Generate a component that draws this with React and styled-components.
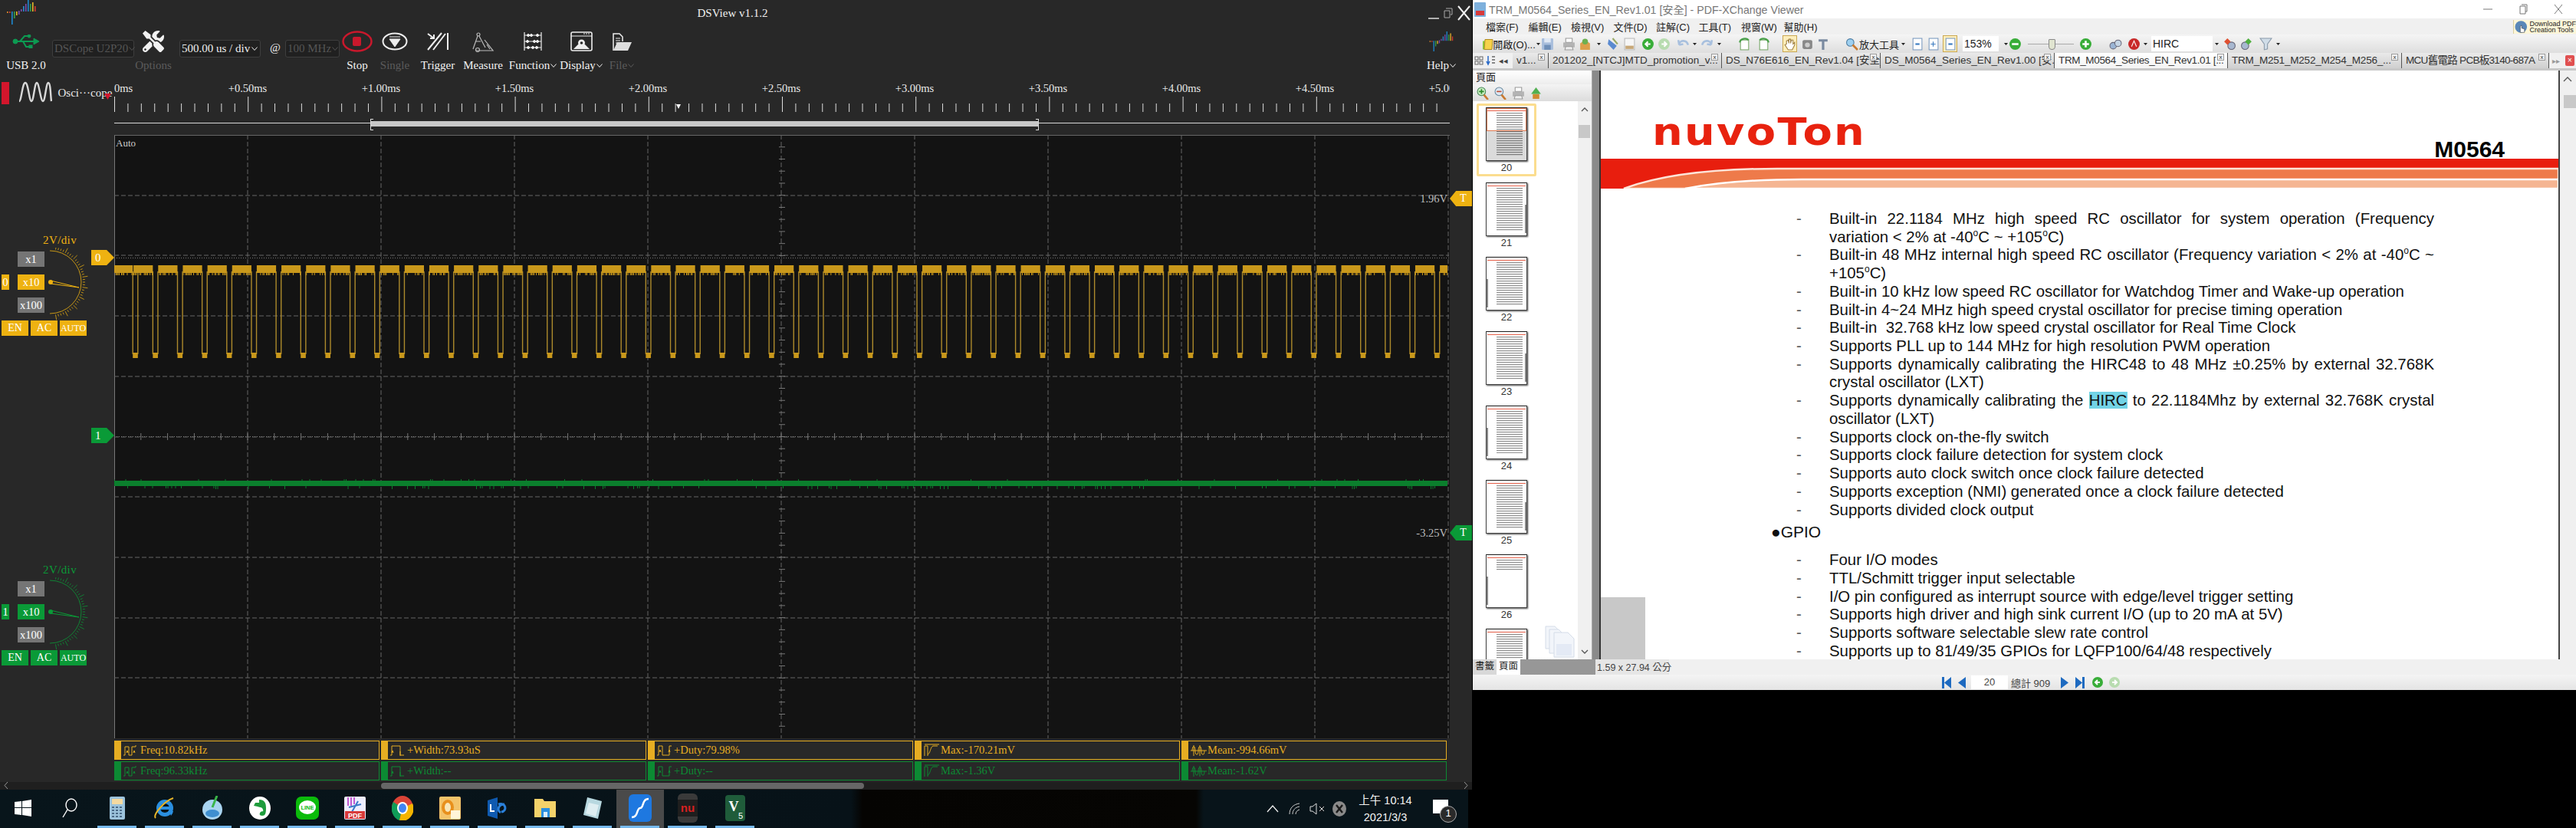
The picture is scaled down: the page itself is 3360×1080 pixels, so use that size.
import React from "react";
import styled, { createGlobalStyle } from "styled-components";
import { FaTools } from "react-icons/fa";

const AMBER = "#eeb211";
const GREEN = "#0a9a37";
const SERIF = `"Liberation Serif", "Noto Sans CJK TC", serif`;
const SANS = `"Liberation Sans", "Noto Sans CJK TC", sans-serif`;

const GlobalStyle = createGlobalStyle`
  html, body { margin: 0; padding: 0; background: #000; overflow: hidden; }
  * { box-sizing: border-box; }
`;

const Screen = styled.div`
  width: 3360px;
  height: 1080px;
  display: grid;
  grid-template-columns: 1921px 1439px;
  background: #000;
  overflow: hidden;
`;

const LeftColumn = styled.div`
  display: flex;
  flex-direction: column;
`;

/* ---------- DSView ---------- */

const Scope = styled.div`
  width: 1920px;
  height: 1030px;
  background: #282828;
  color: #e8e8e8;
  font-family: ${SERIF};
  font-size: 15px;
  display: flex;
  flex-direction: column;
`;

const TitleBar = styled.div`
  height: 36px;
  display: flex;
  align-items: flex-start;
  justify-content: space-between;
  padding-left: 9px;
`;

const Title = styled.div`
  margin-top: 9px;
  font-size: 15px;
  color: #f0f0f0;
`;

const WinButtons = styled.div`
  display: flex;
  align-items: center;
  gap: 6px;
  margin-top: 7px;
  color: #ddd;
`;

const Toolbar = styled.div`
  height: 64px;
  display: flex;
  padding-top: 4px;
`;

const Tool = styled.div`
  width: ${p => p.$w}px;
  margin-left: ${p => p.$ml || 0}px;
  display: flex;
  flex-direction: column;
  align-items: center;
  color: ${p => (p.$off ? "#5c5c5c" : "#f2f2f2")};
`;

const ToolIcon = styled.div`
  height: 28px;
  display: flex;
  align-items: center;
  justify-content: center;
`;

const ToolLabel = styled.div`
  margin-top: 8px;
  height: 18px;
  line-height: 18px;
  white-space: nowrap;
  display: flex;
  align-items: center;
`;

const ChevronMark = styled.svg`
  flex: none;
  margin-left: 1px;
`;

const Chevron = () => (
  <ChevronMark width="8" height="5" viewBox="0 0 8 5">
    <path d="M0.5 0.5L4 4.5L7.5 0.5" fill="none" stroke="currentColor" />
  </ChevronMark>
);

const Combo = styled.div`
  width: ${p => p.$w}px;
  margin-left: ${p => p.$ml || 0}px;
  height: 23px;
  margin-top: 12px;
  border: 1px solid #3e3e3e;
  border-radius: 3px;
  background: #202020;
  display: flex;
  align-items: center;
  justify-content: space-between;
  padding: 0 3px 0 2px;
  color: ${p => (p.$off ? "#555" : "#eee")};
  white-space: nowrap;
`;

const AtSign = styled.div`
  width: 16px;
  margin-left: 12px;
  margin-top: 14px;
  color: #eee;
`;

const Body = styled.div`
  height: 920px;
  display: flex;
`;

const Rail = styled.div`
  width: 149px;
  flex: none;
  display: flex;
  flex-direction: column;
`;

const ChannelHead = styled.div`
  height: 76px;
  position: relative;
  display: flex;
  align-items: flex-start;
  padding: 6px 0 0 2px;
  &::after {
    content: "";
    position: absolute;
    left: 136px;
    top: 22px;
    width: 9px;
    height: 8px;
    background: #d3162c;
    clip-path: polygon(0 0, 100% 0, 50% 100%);
  }
`;

const RedTab = styled.div`
  width: 10px;
  height: 29px;
  margin-top: 1px;
  background: #d3162c;
`;

const ChannelName = styled.div`
  margin: 7px 0 0 0;
  font-size: 15px;
  white-space: nowrap;
`;

const Strip = styled.div`
  margin-top: ${p => p.$mt}px;
  height: 133px;
  padding-left: 2px;
  color: ${p => p.$color};
`;

const StripTitle = styled.div`
  height: 18px;
  line-height: 16px;
  padding-left: 54px;
  font-size: 15px;
  letter-spacing: 0.4px;
`;

const StripMain = styled.div`
  height: 95px;
  display: flex;
`;

const ChanTag = styled.div`
  width: 10px;
  height: 20px;
  margin-top: 35px;
  background: ${p => p.$color};
  color: #fff;
  text-align: center;
  line-height: 20px;
  font-size: 15px;
`;

const Ranges = styled.div`
  margin-left: 11px;
  padding-top: 5px;
  display: flex;
  flex-direction: column;
  gap: 10px;
`;

const Range = styled.div`
  width: 35px;
  height: 20px;
  line-height: 20px;
  text-align: center;
  background: ${p => p.$on || "#757575"};
  color: #fff;
  font-size: 14.5px;
  white-space: nowrap;
`;

const Dial = styled.svg`
  margin-left: 4px;
  display: block;
`;

const StripButtons = styled.div`
  display: flex;
  gap: 3px;
`;

const StripButton = styled.div`
  width: 35px;
  height: 20px;
  line-height: 20px;
  text-align: center;
  background: ${p => p.$color};
  color: #fff;
  font-size: ${p => (p.$tight ? 12 : 14)}px;
  white-space: nowrap;
`;

const ScopeMain = styled.div`
  width: 1742px;
  flex: none;
  display: flex;
  flex-direction: column;
`;

const TimeLabels = styled.div`
  height: 26px;
  padding-top: 6px;
  line-height: 18px;
  font-size: 14.5px;
  display: flex;
  overflow: hidden;
  white-space: nowrap;
`;

const TimeLabel = styled.div`
  flex: none;
  width: ${p => (p.$first ? 87 : 174)}px;
  text-align: ${p => (p.$first ? "left" : "center")};
`;

const Ticks = styled.svg`
  display: block;
`;

const Overview = styled.div`
  height: 30px;
  position: relative;
  &::before {
    content: "";
    position: absolute;
    left: 0;
    right: 0;
    top: 14px;
    height: 1px;
    background: #d8d8d8;
  }
`;

const OverviewThumb = styled.div`
  position: absolute;
  left: 335px;
  top: 12px;
  width: 870px;
  height: 7px;
  background: #c8c8c8;
  &::before,
  &::after {
    content: "";
    position: absolute;
    top: -3px;
    width: 3px;
    height: 13px;
    border: 1px solid #ddd;
  }
  &::before { left: -1px; border-right: 0; }
  &::after { right: -1px; border-left: 0; }
`;

const Plot = styled.div`
  position: relative;
  height: 787px;
  background: #131313;
  border-left: 1px solid #777;
  border-top: 1px solid #666;
  width: 1742px;
`;

const PlotSvg = styled.svg`
  display: block;
  position: absolute;
  left: -1px;
  top: -1px;
`;

const AutoLabel = styled.div`
  position: absolute;
  left: 1px;
  top: 2px;
  font-size: 13px;
  color: #ccc;
`;

const Marker = styled.div`
  position: absolute;
  left: -31px;
  top: ${p => p.$top}px;
  width: 30px;
  height: 20px;
  background: ${p => p.$color};
  clip-path: polygon(0 0, 67% 0, 100% 50%, 67% 100%, 0 100%);
  color: #fff;
  font-size: 15px;
  line-height: 20px;
  padding-left: 5px;
`;

const TrigMarker = styled.div`
  position: absolute;
  left: 1741px;
  top: ${p => p.$top}px;
  width: 29px;
  height: 20px;
  background: ${p => p.$color};
  clip-path: polygon(0 50%, 28% 0, 100% 0, 100% 100%, 28% 100%);
  color: #fff;
  font-size: 14px;
  line-height: 20px;
  text-align: center;
  padding-left: 6px;
`;

const TrigValue = styled.div`
  position: absolute;
  right: 3px;
  top: ${p => p.$top}px;
  font-size: 14.5px;
  color: #bbb;
`;

const Measures = styled.div`
  margin-top: 3px;
  display: grid;
  grid-template-columns: repeat(5, 346px);
  grid-auto-rows: 25px;
  gap: 2px;
`;

const MeasureCell = styled.div`
  border: 1px solid ${p => p.$color};
  border-left: 9px solid ${p => p.$color};
  background: #282828;
  color: ${p => p.$color};
  display: flex;
  align-items: center;
  gap: 1px;
  padding-left: 2px;
  font-size: 14.5px;
  white-space: nowrap;
`;

const HScroll = styled.div`
  height: 10px;
  padding: 1px 0 1px 497px;
  background: #1f1f1f;
  position: relative;
`;

const HThumb = styled.div`
  width: 630px;
  height: 8px;
  border-radius: 4px;
  background: #666;
`;

const HArrow = styled.svg`
  position: absolute;
  top: 0;
  ${p => (p.$right ? "right: 5px;" : "left: 5px;")}
`;

/* ---------- Taskbar ---------- */

const Taskbar = styled.div`
  width: 1915px;
  height: 50px;
  display: flex;
  align-items: stretch;
  background: linear-gradient(
    90deg,
    #08151b 0,
    #071218 1110px,
    #050402 1125px,
    #060503 1560px,
    #08141a 1570px,
    #08141a 100%
  );
  color: #f4f4f4;
  font-family: ${SANS};
`;

const TaskSlot = styled.div`
  width: ${p => p.$w || 62}px;
  flex: none;
  display: flex;
  align-items: center;
  justify-content: center;
  position: relative;
  padding-bottom: 3px;
  background: ${p => (p.$active ? "#4a4a4a" : "transparent")};
  &::after {
    content: ${p => (p.$run ? '""' : "none")};
    position: absolute;
    left: 5px;
    right: 6px;
    bottom: 0;
    height: 3px;
    background: #76b9ed;
  }
`;

const Tray = styled.div`
  margin-left: auto;
  display: flex;
  align-items: center;
  padding-right: 26px;
`;

const TrayIcon = styled.div`
  width: 29px;
  display: flex;
  justify-content: center;
`;

const Clock = styled.div`
  width: 84px;
  margin-left: 4px;
  text-align: center;
  font-size: 14.5px;
  line-height: 22px;
`;

const Notify = styled.div`
  position: relative;
  margin-left: 20px;
  width: 20px;
  height: 18px;
  background: #fff;
  margin-bottom: 6px;
  &::after {
    content: "1";
    position: absolute;
    left: 9px;
    top: 8px;
    width: 20px;
    height: 20px;
    border-radius: 50%;
    border: 1px solid #aaa;
    background: #2a2a2a;
    color: #fff;
    text-align: center;
    font-size: 13px;
    line-height: 18px;
  }
`;

/* ---------- PDF viewer ---------- */

const Pdf = styled.div`
  width: 1439px;
  height: 900px;
  background: #f0f0f0;
  font-family: ${SANS};
  display: flex;
  flex-direction: column;
  color: #222;
`;

const PdfTitle = styled.div`
  height: 24px;
  background: #fff;
  display: flex;
  align-items: center;
  padding-left: 2px;
  font-size: 14.2px;
  color: #777;
`;

const PdfTitleText = styled.div`
  margin-left: 4px;
  flex: 1;
  white-space: nowrap;
`;

const PdfWinButton = styled.div`
  width: 46px;
  display: flex;
  justify-content: center;
`;

const MenuBar = styled.div`
  height: 21px;
  display: flex;
  align-items: center;
  padding-left: 17px;
  font-size: 13px;
  background: #f0f0f0;
`;

const MenuItem = styled.div`
  width: 55.5px;
  white-space: nowrap;
`;

const Promo = styled.div`
  margin-left: auto;
  width: 82px;
  height: 18px;
  background: #fdf6d8;
  border-left: 1px solid #d8cfa0;
  display: flex;
  align-items: center;
  gap: 3px;
  padding-left: 1px;
  font-size: 9px;
  line-height: 8px;
  white-space: nowrap;
`;

const PdfTools = styled.div`
  height: 24px;
  display: flex;
  align-items: center;
  background: linear-gradient(#f5f5f5, #dedede);
  font-size: 13px;
  white-space: nowrap;
`;

const PdfSlot = styled.div`
  flex: none;
  height: 22px;
  width: ${p => p.$w}px;
  margin-left: ${p => p.$ml}px;
  display: flex;
  align-items: center;
  justify-content: center;
  ${p => p.$hot && "background: #fdeebb; border: 1px solid #c9a752;"}
`;

const PdfInput = styled.div`
  flex: none;
  width: ${p => p.$w}px;
  margin-left: ${p => p.$ml}px;
  height: 20px;
  line-height: 20px;
  padding-left: 2px;
  background: #fff;
  font-size: 14px;
`;

const Slider = styled.div`
  flex: none;
  width: 60px;
  margin-left: ${p => p.$ml}px;
  height: 1px;
  background: #aaa;
  position: relative;
  &::after {
    content: "";
    position: absolute;
    left: 27px;
    top: -6px;
    width: 7px;
    height: 12px;
    background: #e0e4d0;
    border: 1px solid #888;
    border-radius: 1px 1px 4px 4px;
  }
`;

const Tabs = styled.div`
  height: 20px;
  display: flex;
  font-size: 13.5px;
  background: #d8d8d8;
`;

const TabTools = styled.div`
  width: 52px;
  flex: none;
  background: #f0f0f0;
  display: flex;
  align-items: center;
  gap: 3px;
  padding-left: 2px;
  color: #444;
  font-size: 11px;
`;

const Tab = styled.div`
  flex: none;
  width: ${p => p.$w}px;
  position: relative;
  padding: 0 0 0 5px;
  line-height: 20px;
  letter-spacing: ${p => p.$ls || 0}px;
  white-space: nowrap;
  border-right: 1px solid #555;
  color: #333;
  background: ${p =>
    p.$active
      ? "linear-gradient(#fff, #f4f4f4)"
      : "linear-gradient(#eaeaea, #cfcfcf)"};
`;

const TabClose = styled.span`
  position: absolute;
  right: 4px;
  top: 1px;
  width: 9px;
  height: 9px;
  border: 1px solid #999;
  background: #f4f4f4;
  font-size: 8px;
  line-height: 7px;
  letter-spacing: 0;
  text-align: center;
`;

const TabEnd = styled.div`
  flex: 1;
  display: flex;
  align-items: center;
  justify-content: space-between;
  padding: 0 2px 0 4px;
  background: #f0f0f0;
  font-size: 10px;
  color: #999;
`;

const RedClose = styled.div`
  width: 12px;
  height: 14px;
  background: #e05050;
  border-radius: 2px;
  color: #fff;
  text-align: center;
  line-height: 14px;
  font-size: 10px;
`;

const PdfMain = styled.div`
  height: 771px;
  display: flex;
  border-top: 3px solid #c8c8c8;
`;

const Pane = styled.div`
  width: 155px;
  flex: none;
  background: #fff;
  display: flex;
  flex-direction: column;
  position: relative;
  overflow: hidden;
`;

const PaneHead = styled.div`
  height: 18px;
  line-height: 18px;
  padding-left: 4px;
  font-size: 13px;
  background: linear-gradient(#fff, #ededed);
`;

const PaneTools = styled.div`
  height: 22px;
  display: flex;
  align-items: center;
  gap: 6px;
  padding-left: 5px;
  background: linear-gradient(#f4f4f4, #dcdcdc);
`;

const PaneBody = styled.div`
  flex: 1;
  position: relative;
  display: flex;
  overflow: hidden;
`;

const ThumbList = styled.div`
  width: 137px;
  padding: 3px 0 0 5px;
  display: flex;
  flex-direction: column;
  align-items: flex-start;
`;

const ThumbFrame = styled.div`
  width: 78px;
  height: 97px;
  flex: none;
  padding-top: ${p => (p.$current ? 5 : 6)}px;
  display: flex;
  flex-direction: column;
  align-items: center;
  ${p =>
    p.$current &&
    "outline: 3px solid #fbdd8f; outline-offset: -3px; border-radius: 2px; height: 95px; margin-bottom: 2px;"}
`;

const ThumbPage = styled.div`
  width: 54px;
  height: 70px;
  flex: none;
  position: relative;
  background: #fff;
  border: 1px solid #444;
  border-top-color: #222;
  box-shadow: 1px 1px 2px #444;
  padding: 6px 5px 0 13px;
  overflow: visible;
  &::before {
    content: "";
    position: absolute;
    left: 1px;
    right: 1px;
    top: 3px;
    height: 1px;
    background: #e5604a;
  }
`;

const ThumbLines = styled.div`
  height: ${p => p.$fill}%;
  background: repeating-linear-gradient(#8e8e8e 0 1px, #e8e8e8 1px 2px, #fff 2px 3px);
`;

const ThumbEdge = styled.div`
  position: absolute;
  top: 28px;
  bottom: 3px;
  width: 2px;
  background: #8a8a8a;
  ${p => (p.$right ? "right: 0;" : "left: 0;")}
`;

const ThumbView = styled.div`
  position: absolute;
  left: 0;
  right: 0;
  top: 0;
  height: 30px;
  border: 1px solid #e0794f;
  &::after {
    content: "";
    position: absolute;
    left: -1px;
    right: -1px;
    top: 29px;
    height: 39px;
    background: rgba(0, 0, 0, 0.14);
  }
`;

const ThumbNo = styled.div`
  margin-top: 2px;
  font-size: 13px;
  line-height: 14px;
  color: #333;
`;

const PaneScroll = styled.div`
  width: 18px;
  flex: none;
  background: #f0f0f0;
  position: relative;
`;

const PaneScrollThumb = styled.div`
  position: absolute;
  left: 1px;
  top: 31px;
  width: 15px;
  height: 17px;
  background: #c8c8c8;
`;

const ScrollArrow = styled.svg`
  position: absolute;
  left: 4px;
  ${p => (p.$down ? "bottom: 7px;" : "top: 8px;")}
`;

const GhostDocs = styled.svg`
  position: absolute;
  left: 94px;
  bottom: 2px;
`;

const Splitter = styled.div`
  width: 12px;
  flex: none;
  background: #8a8a8a;
  border-right: 2px solid #333;
  border-left: 1px solid #aaa;
`;

const Page = styled.div`
  width: 1249px;
  flex: none;
  background: #fff;
  position: relative;
  overflow: hidden;
  color: #111;
`;

const PageHead = styled.div`
  height: 115px;
  display: flex;
  align-items: flex-end;
  justify-content: space-between;
  padding: 0 70px 0 67px;
`;

const Brand = styled.div`
  font-family: "DejaVu Sans", sans-serif;
  font-weight: 700;
  font-size: 49px;
  line-height: 50px;
  letter-spacing: 2px;
  color: #e8220f;
  margin-bottom: 9px;
  transform: scaleX(1.14);
  transform-origin: left center;
`;

const PartNo = styled.div`
  font-weight: 700;
  font-size: 30px;
  line-height: 30px;
  color: #000;
  margin-bottom: -3px;
`;

const Band = styled.svg`
  display: block;
`;

const Sheet = styled.div`
  padding: 28px 0 0 255px;
  width: 1090px;
  font-size: 20.4px;
  line-height: 23.72px;
`;

const Item = styled.div`
  display: flex;
  width: 832px;
`;

const Dash = styled.div`
  width: 43px;
  flex: none;
  color: #555;
`;

const ItemText = styled.div`
  flex: 1;
  text-align: justify;
`;

const Degree = styled.span`
  font-size: 12px;
  line-height: 0;
  vertical-align: 8px;
`;

const Hit = styled.span`
  background: #72d3e6;
`;

const SectionHead = styled.div`
  margin: 2px 0 10px -33px;
  height: 30px;
  line-height: 30px;
  font-size: 21px;
`;

const CornerSquare = styled.div`
  position: absolute;
  left: 0;
  bottom: 0;
  width: 58px;
  height: 81px;
  background: #c8c8c8;
`;

const VScroll = styled.div`
  flex: 1;
  background: #f0f0f0;
  border-left: 2px solid #444;
  position: relative;
`;

const VThumb = styled.div`
  position: absolute;
  left: 5px;
  top: 32px;
  width: 16px;
  height: 17px;
  background: #c8c8c8;
`;

const StatusRow = styled.div`
  height: 20px;
  display: flex;
  align-items: stretch;
  background: #f0f0f0;
  font-size: 13px;
  white-space: nowrap;
`;

const PaneTab = styled.div`
  width: 31px;
  flex: none;
  text-align: center;
  line-height: 18px;
  font-size: 12.5px;
  background: ${p => (p.$on ? "#fff" : "#d8d8d8")};
`;

const Dither = styled.div`
  width: 98px;
  flex: none;
  background: repeating-conic-gradient(#8a8a8a 0 25%, #a4a4a4 0 50%) 0 0 / 2px 2px;
`;

const PageSize = styled.div`
  width: 96px;
  padding-left: 2px;
  line-height: 22px;
  background: #e6e6e6;
  color: #444;
  font-size: 12.5px;
`;

const NavRow = styled.div`
  height: 20px;
  display: flex;
  align-items: center;
  background: linear-gradient(#f4f4f4, #e4e4e4);
  padding-left: 612px;
  font-size: 13px;
  color: #444;
`;

const NavInput = styled.div`
  width: 48px;
  margin: 0 4px 0 7px;
  height: 18px;
  line-height: 18px;
  background: #fff;
  text-align: center;
`;

const NavIcon = styled.svg`
  margin-left: ${p => p.$ml || 0}px;
  flex: none;
`;

/* ---------- Drawings ---------- */

const Bars = ({ w, h }) => {
  const bars = [
    [0, 15, 17, "#e08a2a"], [3, 15, 17, "#d63a30"], [6, 15, 32, "#1e88d0"], [9, 15, 24, "#33a04a"],
    [12, 15, 20, "#e8b52a"], [15, 14, 19, "#7a4ab0"], [18, 12, 15, "#7a4ab0"], [21, 8, 15, "#2a8ad0"],
    [24, 5, 15, "#7a4ab0"], [27, 0, 15, "#1e88d0"], [30, 5, 15, "#33a04a"], [33, 3, 15, "#e8b52a"], [36, 8, 15, "#d63a30"],
  ];
  return (
    <svg width={w} height={h} viewBox="0 0 39 32">
      {bars.map(([x, a, b, c]) => (
        <rect key={x} x={x} y={a} width="1.6" height={b - a} fill={c} />
      ))}
    </svg>
  );
};

const UsbIcon = () => (
  <svg width="36" height="18" viewBox="0 0 36 18">
    <g fill="#0d9a52" stroke="#0d9a52">
      <circle cx="4" cy="9" r="3" />
      <path d="M4 9H28" strokeWidth="2" />
      <path d="M28 5l7 4-7 4z" />
      <path d="M10 9L16 2H21M14 9L18 16H23" fill="none" strokeWidth="2" />
      <circle cx="22" cy="2" r="2" />
      <rect x="22" y="14" width="4" height="4" />
    </g>
  </svg>
);

const StopIcon = () => (
  <svg width="40" height="28" viewBox="0 0 40 28">
    <ellipse cx="20" cy="14" rx="18.5" ry="12.5" fill="none" stroke="#c9182c" strokeWidth="2.5" />
    <rect x="14" y="8" width="11" height="12" rx="2" fill="#c9182c" />
  </svg>
);

const SingleIcon = () => (
  <svg width="34" height="24" viewBox="0 0 34 24">
    <ellipse cx="17" cy="12" rx="15.5" ry="10.5" fill="none" stroke="#eee" strokeWidth="2" />
    <path d="M10 9H24L17 19Z M10 6H24" fill="#eee" stroke="#eee" />
  </svg>
);

const TriggerIcon = () => (
  <svg width="30" height="24" viewBox="0 0 30 24">
    <g stroke="#eee" fill="none">
      <path d="M28 1V23" strokeWidth="2" />
      <path d="M20 1L2 23M25 2L9 23" strokeWidth="2" />
      <path d="M2 2L10 8M10 3V8H5" strokeWidth="2" />
    </g>
  </svg>
);

const MeasureIcon = () => (
  <svg width="30" height="28" viewBox="0 0 30 28">
    <g stroke="#bbb" fill="none" strokeWidth="1.2">
      <circle cx="9" cy="5" r="2" />
      <path d="M8 7L2 24M10 7L18 22" />
      <path d="M6 14H12M17 12L28 26H6" />
      <circle cx="8" cy="25" r="2.5" />
      <path d="M20 18L24 24" />
    </g>
  </svg>
);

const AbacusIcon = () => (
  <svg width="24" height="24" viewBox="0 0 24 24">
    <g stroke="#eee" fill="#eee">
      <path d="M1 0V24M23 0V24M1 4H23M1 12H23M1 20H23" strokeWidth="1.2" fill="none" />
      <circle cx="6" cy="4" r="1.5" /><circle cx="10" cy="4" r="1.5" /><circle cx="18" cy="4" r="1.5" />
      <circle cx="5" cy="12" r="1.5" /><circle cx="14" cy="12" r="1.5" /><circle cx="18" cy="12" r="1.5" />
      <circle cx="6" cy="20" r="1.5" /><circle cx="12" cy="20" r="1.5" /><circle cx="17" cy="20" r="1.5" />
    </g>
  </svg>
);

const DisplayIcon = () => (
  <svg width="29" height="26" viewBox="0 0 29 26">
    <rect x="1" y="1" width="27" height="24" rx="2" fill="none" stroke="#eee" strokeWidth="1.6" />
    <path d="M1 6H28" stroke="#eee" />
    <path d="M20 3h2M23 3h2M17 3h2" stroke="#eee" />
    <circle cx="14.5" cy="15" r="4.5" fill="#eee" />
    <path d="M4 23L10 17H19L25 23Z" fill="#eee" />
    <circle cx="14.5" cy="15" r="1.8" fill="#282828" />
  </svg>
);

const FileIcon = () => (
  <svg width="28" height="26" viewBox="0 0 28 26">
    <path d="M3 25V3H11L15 7V13" fill="none" stroke="#eee" strokeWidth="1.5" />
    <path d="M6 9H12M6 12H12M6 15H12" stroke="#eee" />
    <path d="M3 25L8 14H27L22 25Z" fill="#ddd" />
  </svg>
);

const WaveIcon = () => (
  <svg width="44" height="28" viewBox="0 0 44 28" style={{ marginLeft: 12 }}>
    <path
      d="M1 26C4 26 5 2 9 2S14 26 17 26 21 2 24 2 29 26 32 26 36 2 39 2 42 20 43 26"
      fill="none"
      stroke="#d8d8d8"
      strokeWidth="2.4"
    />
  </svg>
);

const DialDrawing = ({ color }) => {
  const ticks = [];
  for (let i = 0; i <= 36; i++) {
    const a = ((-80 + (160 * i) / 36) * Math.PI) / 180;
    const long = i % 4 === 0;
    const r0 = 43;
    const r1 = long ? 50 : 46;
    ticks.push(
      <line
        key={i}
        x1={3 + r0 * Math.cos(a)}
        y1={45 + r0 * Math.sin(a)}
        x2={3 + r1 * Math.cos(a)}
        y2={45 + r1 * Math.sin(a)}
        stroke={color}
        strokeOpacity="0.75"
      />
    );
  }
  return (
    <Dial width="54" height="95" viewBox="0 0 54 95">
      <path d="M3 4A41 41 0 0 1 3 86" fill="none" stroke={color} strokeOpacity="0.8" />
      {ticks}
      <polygon points="4,43 41,52 4,47" fill="none" stroke={color} />
      <circle cx="4" cy="45" r="3" fill={color} />
    </Dial>
  );
};

const Pulse = ({ kind }) => {
  const d = {
    freq: "M1 15H3V4H8V15H12V4H17V2M5 12L6 9L7 12M14 12L15 9L16 12",
    width: "M1 15H3V3H14V15H19M3 12L4 9L5 12M14 10V16",
    duty: "M1 15H3V3H8V15H17V3H20M4 11L5 8L6 11M16 11L17 8L18 11",
    max: "M2 16V3H6V16M6 14C9 14 10 3 13 3H19M2 1H21",
    mean: "M1 9H22M3 9C3 2 7 2 7 9S11 16 11 9 15 2 15 9 19 16 19 9M5 2V16M13 2V16",
  }[kind];
  return (
    <svg width="22" height="18" viewBox="0 0 22 18">
      <path d={d} fill="none" stroke="currentColor" />
    </svg>
  );
};

/* wave forms are deterministic so every render looks the same */
const noise = i => (i * 7919 + ((i * i) % 97) * 31) % 13;

const PERIOD = 32.15;

const buildChannel0 = () => {
  let band = "";
  let comb = "";
  let edges = "";
  for (let n = 0; n < 55; n++) {
    const start = n === 0 ? -7 : n * PERIOD - 7;
    const fall = start + 25.2 + (n === 0 ? 6 : 0);
    const x0 = Math.max(start, 0);
    if (x0 >= 1739) break;
    const x1 = Math.min(fall, 1739);
    band += `M${x0} 170H${x1}V180H${x0}Z`;
    for (let x = x0; x < x1; x += 1.5) {
      if (noise(Math.round(x * 2)) > 5) comb += `M${x} 180h1v3h-1Z`;
    }
    if (fall < 1739) {
      const rise = Math.min(fall + 6.6, 1739);
      band += `M${fall} 284H${rise}V291H${fall}Z`;
      edges += `M${fall} 178V286M${rise} 178V286`;
    }
  }
  return { band, comb, edges };
};

const buildChannel1 = () => {
  let ticks = "";
  for (let x = 0; x < 1739; x += 2.5) {
    const v = noise(Math.round(x * 2));
    if (v > 10) ticks += `M${x} 458v${v - 8}`;
    if (v < 1) ticks += `M${x} 451v-${2}`;
  }
  return ticks;
};

const CH0 = buildChannel0();
const CH1 = buildChannel1();

const Waveforms = () => {
  const vLines = Array.from({ length: 10 }, (_, i) => (i + 1) * 174);
  const hLines = Array.from({ length: 9 }, (_, i) => Math.round((i + 1) * 78.7));
  const hTicks = Array.from({ length: 49 }, (_, i) => (i + 1) * 34.8);
  const vTicks = Array.from({ length: 49 }, (_, i) => (i + 1) * 15.74);
  return (
    <PlotSvg width="1742" height="787" viewBox="0 0 1742 787">
      <g stroke="#666" strokeDasharray="6 3">
        {vLines.map(x => <line key={x} x1={x} y1="0" x2={x} y2="787" />)}
        {hLines.map(y => <line key={y} x1="0" y1={y} x2="1741" y2={y} />)}
      </g>
      <line x1="0" y1="160.5" x2="1741" y2="160.5" stroke="#777" strokeDasharray="1 2" />
      <line x1="0" y1="393.5" x2="1741" y2="393.5" stroke="#777" strokeDasharray="1 2" />
      <g stroke="#777">
        {hTicks.map(x => <line key={x} x1={x} y1="389" x2={x} y2="398" />)}
        {vTicks.map(y => <line key={y} x1="867" y1={y} x2="875" y2={y} />)}
      </g>
      <path d={CH0.edges} stroke="#ad8a2c" strokeWidth="1.4" fill="none" />
      <path d={CH0.band} fill="#c9981b" />
      <path d={CH0.comb} fill="#c9981b" />
      <rect x="0" y="451" width="1739" height="7" fill="#0b7f2d" />
      <path d={CH1} stroke="#0b7f2d" fill="none" />
    </PlotSvg>
  );
};

const RulerTicks = () => {
  const items = [];
  for (let i = 0; i <= 100; i++) {
    const x = i * 17.42 + 0.5;
    if (x > 1742) break;
    items.push(<line key={i} x1={x} y1={i % 10 === 0 ? 0 : 9} x2={x} y2="20" />);
  }
  return (
    <Ticks width="1742" height="20" viewBox="0 0 1742 20" stroke="#ddd">
      {items}
      <path d="M733 10l3 6 3-6z" fill="#fff" stroke="none" />
    </Ticks>
  );
};

const ChannelStrip = ({ id, color, mt }) => (
  <Strip $mt={mt} $color={color}>
    <StripTitle>2V/div</StripTitle>
    <StripMain>
      <ChanTag $color={color}>{id}</ChanTag>
      <Ranges>
        <Range>x1</Range>
        <Range $on={color}>x10</Range>
        <Range>x100</Range>
      </Ranges>
      <DialDrawing color={color} />
    </StripMain>
    <StripButtons>
      <StripButton $color={color}>EN</StripButton>
      <StripButton $color={color}>AC</StripButton>
      <StripButton $color={color} $tight>AUTO</StripButton>
    </StripButtons>
  </Strip>
);

const measureRows = [
  { color: "#e6ad22", vals: ["Freq:10.82kHz", "+Width:73.93uS", "+Duty:79.98%", "Max:-170.21mV", "Mean:-994.66mV"] },
  { color: "#0c8a33", vals: ["Freq:96.33kHz", "+Width:--", "+Duty:--", "Max:-1.36V", "Mean:-1.62V"] },
];
const measureKinds = ["freq", "width", "duty", "max", "mean"];
const timeLabels = ["+0.50ms", "+1.00ms", "+1.50ms", "+2.00ms", "+2.50ms", "+3.00ms", "+3.50ms", "+4.00ms", "+4.50ms", "+5.00ms"];

const DSView = () => (
  <Scope>
    <TitleBar>
      <Bars w={39} h={32} />
      <Title>DSView v1.1.2</Title>
      <WinButtons>
        <svg width="14" height="16" viewBox="0 0 14 16"><path d="M0 15H14" stroke="#ddd" strokeWidth="1.5" /></svg>
        <svg width="12" height="16" viewBox="0 0 12 16"><path d="M3 2H11V10H9M1 5H8V14H1Z" stroke="#aaa" fill="none" /></svg>
        <svg width="17" height="20" viewBox="0 0 17 20" style={{ marginRight: 2 }}><path d="M1 1L16 19M16 1L1 19" stroke="#eee" strokeWidth="2" /></svg>
      </WinButtons>
    </TitleBar>
    <Toolbar>
      <Tool $w={68}>
        <ToolIcon><UsbIcon /></ToolIcon>
        <ToolLabel>USB 2.0</ToolLabel>
      </Tool>
      <Combo $w={107} $off>DSCope U2P20<Chevron /></Combo>
      <Tool $w={50} $off>
        <ToolIcon><FaTools size={28} color="#f2f2f2" /></ToolIcon>
        <ToolLabel>Options</ToolLabel>
      </Tool>
      <Combo $w={106} $ml={9}>500.00 us / div<Chevron /></Combo>
      <AtSign>@</AtSign>
      <Combo $w={71} $ml={4} $off>100 MHz<Chevron /></Combo>
      <Tool $w={44} $ml={1}>
        <ToolIcon><StopIcon /></ToolIcon>
        <ToolLabel>Stop</ToolLabel>
      </Tool>
      <Tool $w={50} $ml={2} $off>
        <ToolIcon><SingleIcon /></ToolIcon>
        <ToolLabel>Single</ToolLabel>
      </Tool>
      <Tool $w={50} $ml={6}>
        <ToolIcon><TriggerIcon /></ToolIcon>
        <ToolLabel>Trigger</ToolLabel>
      </Tool>
      <Tool $w={52} $ml={8}>
        <ToolIcon><MeasureIcon /></ToolIcon>
        <ToolLabel>Measure</ToolLabel>
      </Tool>
      <Tool $w={58} $ml={10}>
        <ToolIcon><AbacusIcon /></ToolIcon>
        <ToolLabel>Function<Chevron /></ToolLabel>
      </Tool>
      <Tool $w={56} $ml={6}>
        <ToolIcon><DisplayIcon /></ToolIcon>
        <ToolLabel>Display<Chevron /></ToolLabel>
      </Tool>
      <Tool $w={42} $ml={4} $off>
        <ToolIcon><FileIcon /></ToolIcon>
        <ToolLabel>File<Chevron /></ToolLabel>
      </Tool>
      <Tool $w={40} $ml={1028}>
        <ToolIcon><Bars w={33} h={26} /></ToolIcon>
        <ToolLabel>Help<Chevron /></ToolLabel>
      </Tool>
    </Toolbar>
    <Body>
      <Rail>
        <ChannelHead>
          <RedTab />
          <WaveIcon />
          <ChannelName>&nbsp;&nbsp;Osci···cope</ChannelName>
        </ChannelHead>
        <ChannelStrip id="0" color={AMBER} mt={129} />
        <ChannelStrip id="1" color={GREEN} mt={297} />
      </Rail>
      <ScopeMain>
        <TimeLabels>
          <TimeLabel $first>0ms</TimeLabel>
          {timeLabels.map(t => <TimeLabel key={t}>{t}</TimeLabel>)}
        </TimeLabels>
        <RulerTicks />
        <Overview><OverviewThumb /></Overview>
        <Plot>
          <Waveforms />
          <AutoLabel>Auto</AutoLabel>
          <Marker $top={149} $color={AMBER}>0</Marker>
          <Marker $top={381} $color={GREEN}>1</Marker>
          <TrigValue $top={74}>1.96V</TrigValue>
          <TrigValue $top={510}>-3.25V</TrigValue>
          <TrigMarker $top={72} $color={AMBER}>T</TrigMarker>
          <TrigMarker $top={508} $color={GREEN}>T</TrigMarker>
        </Plot>
        <Measures>
          {measureRows.map(row =>
            row.vals.map((v, i) => (
              <MeasureCell key={row.color + i} $color={row.color}>
                <Pulse kind={measureKinds[i]} />
                {v}
              </MeasureCell>
            ))
          )}
        </Measures>
      </ScopeMain>
    </Body>
    <HScroll>
      <HArrow width="6" height="9" viewBox="0 0 6 9"><path d="M5 0L1 4.5L5 9" fill="none" stroke="#999" /></HArrow>
      <HThumb />
      <HArrow $right width="6" height="9" viewBox="0 0 6 9"><path d="M1 0L5 4.5L1 9" fill="none" stroke="#999" /></HArrow>
    </HScroll>
  </Scope>
);

const taskIcons = {
  start: (
    <svg width="22" height="22" viewBox="0 0 22 22" fill="#fff">
      <path d="M0 3L9 2V10H0ZM10 2L22 0V10H10ZM0 11H9V20L0 19ZM10 11H22V22L10 20Z" />
    </svg>
  ),
  search: (
    <svg width="22" height="26" viewBox="0 0 22 26" fill="none" stroke="#fff" strokeWidth="1.4">
      <ellipse cx="13" cy="9" rx="7" ry="8" />
      <path d="M8 15L2 25" />
    </svg>
  ),
  calc: (
    <svg width="22" height="30" viewBox="0 0 22 30">
      <rect x="1" y="0" width="20" height="30" rx="2" fill="#9cc3dc" />
      <rect x="4" y="3" width="14" height="7" fill="#f4d9a0" />
      <path d="M4 14h3M9 14h3M14 14h3M4 18h3M9 18h3M14 18h3M4 22h3M9 22h3M14 22h3M4 26h3M9 26h3M14 26h3" stroke="#4a6a88" strokeWidth="2" />
    </svg>
  ),
  ie: (
    <svg width="30" height="30" viewBox="0 0 30 30">
      <circle cx="15" cy="15" r="11" fill="#2a8fe0" />
      <circle cx="15" cy="15" r="6" fill="#08131a" />
      <rect x="6" y="13" width="18" height="4" fill="#2a8fe0" />
      <path d="M21 19l5 0a11 11 0 0 1-3 6z" fill="#2a8fe0" />
      <path d="M3 28C-1 24 14 6 26 2" fill="none" stroke="#e8b62a" strokeWidth="2" />
    </svg>
  ),
  ball: (
    <svg width="28" height="32" viewBox="0 0 28 32">
      <ellipse cx="14" cy="18" rx="13" ry="13" fill="#a8d4f0" />
      <ellipse cx="14" cy="23" rx="9" ry="5" fill="#3f8fd0" />
      <path d="M14 15L20 0" stroke="#3ab54a" strokeWidth="3" />
    </svg>
  ),
  ever: (
    <svg width="28" height="30" viewBox="0 0 28 30">
      <ellipse cx="14" cy="15" rx="14" ry="15" fill="#fff" />
      <path d="M8 8H13V4C20 4 22 8 22 15S21 25 17 25 13 22 15 20 19 21 18 17 12 14 11 13L6 12Z" fill="#1e9c3c" />
    </svg>
  ),
  line: (
    <svg width="30" height="30" viewBox="0 0 30 30">
      <rect width="30" height="30" rx="7" fill="#0bbb0b" />
      <ellipse cx="15" cy="14" rx="11" ry="9" fill="#fff" />
      <text x="15" y="17" fontSize="7.5" fontWeight="700" fill="#0bbb0b" textAnchor="middle" fontFamily="Liberation Sans">LINE</text>
    </svg>
  ),
  pdf: (
    <svg width="28" height="30" viewBox="0 0 28 30">
      <rect width="28" height="30" fill="#eef" rx="2" />
      <path d="M5 1V12M9 1V12M13 1V10" stroke="#c05ad0" strokeWidth="2" />
      <path d="M6 14L22 10M10 20L18 6" stroke="#3a78c8" strokeWidth="2" />
      <rect x="1" y="19" width="26" height="10" fill="#d83a3a" />
      <text x="14" y="27.5" fontSize="9" fontWeight="700" fill="#fff" textAnchor="middle" fontFamily="Liberation Sans">PDF</text>
    </svg>
  ),
  chrome: (
    <svg width="28" height="32" viewBox="0 0 28 32">
      <ellipse cx="14" cy="16" rx="14" ry="16" fill="#db4437" />
      <path d="M14 16L2 8A14 16 0 0 0 10 32Z" fill="#0f9d58" />
      <path d="M14 16L10 32A14 16 0 0 0 27 10Z" fill="#f4b400" />
      <ellipse cx="14" cy="16" rx="7" ry="8" fill="#fff" />
      <ellipse cx="14" cy="16" rx="5" ry="6" fill="#4285f4" />
    </svg>
  ),
  outlook: (
    <svg width="28" height="30" viewBox="0 0 28 30">
      <rect width="28" height="30" fill="#f4c46a" rx="2" />
      <ellipse cx="11" cy="14" rx="8" ry="10" fill="#e8901c" />
      <ellipse cx="11" cy="14" rx="4" ry="6" fill="#f8e6b8" />
      <rect x="15" y="18" width="12" height="11" fill="#fff4d8" />
    </svg>
  ),
  lync: (
    <svg width="26" height="28" viewBox="0 0 26 28">
      <path d="M0 4L13 0V28L0 24Z" fill="#0f5ab0" />
      <path d="M4 9V18H9" stroke="#fff" strokeWidth="2" fill="none" />
      <path d="M14 9C24 6 26 18 18 19M17 20C11 16 15 9 22 9" stroke="#2a7fd8" strokeWidth="3" fill="none" />
    </svg>
  ),
  folder: (
    <svg width="28" height="24" viewBox="0 0 28 24">
      <path d="M0 0H11L13 3H28V24H0Z" fill="#f4d26a" />
      <rect x="9" y="12" width="11" height="12" fill="#2a8fe0" />
      <rect x="12" y="17" width="5" height="7" fill="#d8eefc" />
    </svg>
  ),
  note: (
    <svg width="26" height="30" viewBox="0 0 26 30">
      <path d="M6 1L25 6L20 29L1 24Z" fill="#b8d8e0" />
      <path d="M8 8L21 11L17 26L4 22Z" fill="#dfeef2" />
    </svg>
  ),
  wave: (
    <svg width="30" height="36" viewBox="0 0 30 36">
      <rect width="30" height="36" rx="6" fill="#1e78e0" />
      <path d="M4 30C13 30 10 18 15 18S17 6 26 6" fill="none" stroke="#fff" strokeWidth="2.5" />
    </svg>
  ),
  nu: (
    <svg width="28" height="38" viewBox="0 0 28 38">
      <rect x="1" y="0" width="26" height="38" rx="6" fill="#3a3a3a" />
      <rect x="1" y="8" width="26" height="22" fill="#1e1e1e" />
      <text x="14" y="24" fontSize="15" fontWeight="700" fill="#d82020" textAnchor="middle" fontFamily="Liberation Sans">nu</text>
    </svg>
  ),
  v5: (
    <svg width="26" height="34" viewBox="0 0 26 34">
      <rect width="26" height="34" rx="4" fill="#1f5c3a" />
      <text x="11" y="21" fontSize="18" fontWeight="700" fill="#fff" textAnchor="middle" fontFamily="Liberation Serif">V</text>
      <text x="20" y="31" fontSize="11" fill="#fff" textAnchor="middle" fontFamily="Liberation Sans">5</text>
    </svg>
  ),
};

const taskItems = [
  { k: "start", w: 60 },
  { k: "search", w: 62 },
  { k: "calc", run: true },
  { k: "ie", run: true },
  { k: "ball", run: true },
  { k: "ever", run: true },
  { k: "line", run: true },
  { k: "pdf", run: true },
  { k: "chrome", run: true },
  { k: "outlook", run: true },
  { k: "lync", run: true },
  { k: "folder", run: true },
  { k: "note", run: true },
  { k: "wave", run: true, active: true },
  { k: "nu", run: true },
  { k: "v5", run: true },
];

const TaskBar = () => (
  <Taskbar>
    {taskItems.map(t => (
      <TaskSlot key={t.k} $w={t.w} $run={t.run} $active={t.active}>
        {taskIcons[t.k]}
      </TaskSlot>
    ))}
    <Tray>
      <TrayIcon>
        <svg width="16" height="10" viewBox="0 0 16 10"><path d="M1 9L8 1L15 9" stroke="#eee" fill="none" strokeWidth="1.3" /></svg>
      </TrayIcon>
      <TrayIcon>
        <svg width="16" height="16" viewBox="0 0 16 16" fill="none" stroke="#ccc"><path d="M1 15C1 7 6 2 14 1M5 15C5 10 8 6 14 5M9 15C9 12 11 10 14 9" /></svg>
      </TrayIcon>
      <TrayIcon>
        <svg width="20" height="16" viewBox="0 0 20 16" fill="none" stroke="#ddd"><path d="M1 5H4L9 1V15L4 11H1Z" /><path d="M13 5L19 11M19 5L13 11" /></svg>
      </TrayIcon>
      <TrayIcon>
        <svg width="18" height="20" viewBox="0 0 18 20"><ellipse cx="9" cy="10" rx="9" ry="10" fill="#8a8a8a" /><path d="M5 5L13 15M13 5L5 15" stroke="#1a1a1a" strokeWidth="2.4" /></svg>
      </TrayIcon>
      <Clock>上午 10:14<br />2021/3/3</Clock>
      <Notify />
    </Tray>
  </Taskbar>
);

/* small colour glyphs of the viewer toolbar, 16x16 */
const pdfGlyphs = {
  folder: <><path d="M1 4H7V15H1Z" fill="#8ac63c" /><path d="M4 2H14L13 15H3Z" fill="#f6d24a" stroke="#b08a20" /></>,
  save: <><rect x="1" y="1" width="14" height="14" rx="1" fill="#a8bedc" /><rect x="4" y="1" width="8" height="5" fill="#dfe8f4" /><rect x="4" y="9" width="8" height="6" fill="#6f8fb8" /></>,
  print: <><path d="M4 1H12V6H4Z" fill="#fff" stroke="#999" /><path d="M1 6H15V12H1Z" fill="#b4b4b4" /><path d="M4 11L3 15H13L12 11Z" fill="#eee" stroke="#999" /></>,
  box: <><path d="M2 7L8 3L14 7V15H2Z" fill="#dca04a" /><circle cx="8" cy="5" r="3.5" fill="#6cb050" /></>,
  mail: <><path d="M3 2L13 10L9 15L2 8Z" fill="#5a8ad0" /><path d="M8 1L14 8" stroke="#9a6" strokeWidth="2" /></>,
  ocr: <><rect x="2" y="1" width="12" height="14" fill="#f6f6f6" stroke="#bbb" /><path d="M3 10H13V14H3Z" fill="#c8a878" /></>,
  back: <><circle cx="8" cy="8" r="7" fill="#38ad38" /><path d="M11 8H6M8 5L5 8L8 11" stroke="#fff" strokeWidth="2" fill="none" /></>,
  fwd: <><circle cx="8" cy="8" r="7" fill="#b8dcb0" /><path d="M5 8H10M8 5L11 8L8 11" stroke="#fff" strokeWidth="2" fill="none" /></>,
  undo: <path d="M3 9C3 3 12 2 14 9M3 9L2 3M3 9L8 8" stroke="#a8c0de" strokeWidth="2.4" fill="none" />,
  redo: <path d="M13 9C13 3 4 2 2 9M13 9L14 3M13 9L8 8" stroke="#a8c0de" strokeWidth="2.4" fill="none" />,
  rotL: <><rect x="3" y="3" width="10" height="12" fill="#fff" stroke="#78a868" /><path d="M2 6C3 1 10 0 13 3" stroke="#4aa04a" strokeWidth="2" fill="none" /></>,
  rotR: <><rect x="3" y="3" width="10" height="12" fill="#fff" stroke="#78a868" /><path d="M14 6C13 1 6 0 3 3" stroke="#4aa04a" strokeWidth="2" fill="none" /></>,
  hand: <path d="M4 8V4L6 3L7 7V2H9V7L10 3H12V8L14 6V9L11 15H6L2 9Z" fill="#fff" stroke="#a08040" />,
  cam: <><rect x="2" y="3" width="12" height="11" rx="2" fill="#888" /><circle cx="8" cy="9" r="3" fill="#ccc" /></>,
  type: <path d="M2 2H13V5H9V15H6V5H2Z" fill="#7a8aa0" />,
  zoom: <><circle cx="6" cy="6" r="4.5" fill="#9ed0f0" stroke="#4a7aa0" /><path d="M9 9L15 15" stroke="#c87a30" strokeWidth="2.5" /></>,
  page1: <><rect x="3" y="1" width="11" height="14" fill="#fff" stroke="#7a9ac0" /><path d="M6 8H11" stroke="#3a7ac0" strokeWidth="2" /></>,
  page2: <><rect x="3" y="1" width="11" height="14" fill="#fff" stroke="#7a9ac0" /><path d="M8 5V11M5 8H11" stroke="#3a7ac0" /></>,
  minus: <><circle cx="8" cy="8" r="7" fill="#38ad38" /><path d="M4 8H12" stroke="#fff" strokeWidth="2.4" /></>,
  plus: <><circle cx="8" cy="8" r="7" fill="#38ad38" /><path d="M4 8H12M8 4V12" stroke="#fff" strokeWidth="2.4" /></>,
  find: <><circle cx="5" cy="10" r="4" fill="#9ab4d4" stroke="#667" /><circle cx="11" cy="7" r="4" fill="#c4d4e4" stroke="#667" /></>,
  acro: <><circle cx="8" cy="8" r="7" fill="#c82828" /><path d="M5 11L8 4L11 11" stroke="#fff" fill="none" /></>,
  prev: <><circle cx="10" cy="10" r="4.5" fill="#a8b8d0" stroke="#667" /><path d="M5 1L9 5L5 9L1 5Z" fill="#e05030" /></>,
  next: <><circle cx="6" cy="10" r="4.5" fill="#a8b8d0" stroke="#667" /><path d="M10 1L14 5L10 9L6 5Z" fill="#50b040" /></>,
  funnel: <path d="M1 1H15L10 8V14L6 15V8Z" fill="#d0dde8" stroke="#8a9aaa" />,
  tree: <><rect x="4" y="9" width="8" height="6" fill="#d08a30" /><path d="M8 1L14 9H2Z" fill="#50b050" /></>,
  zoomIn: <><circle cx="6" cy="6" r="5" fill="#c8ecc0" stroke="#4a8a5a" /><path d="M3 6H9M6 3V9" stroke="#2a8a2a" strokeWidth="1.5" /><path d="M9 10L14 16" stroke="#c87a30" strokeWidth="2.5" /></>,
  zoomOut: <><circle cx="6" cy="6" r="5" fill="#dde8f2" stroke="#6a8aa0" /><path d="M3 6H9" stroke="#c04a30" strokeWidth="1.5" /><path d="M9 10L14 16" stroke="#c87a30" strokeWidth="2.5" /></>,
};

const Glyph = ({ k, size = 17 }) => (
  <svg width={size} height={size} viewBox="0 0 16 16">{pdfGlyphs[k]}</svg>
);

const Drop = () => (
  <svg width="5" height="3" viewBox="0 0 5 3"><path d="M0 0H5L2.5 3Z" fill="#222" /></svg>
);

/* [left x on screen, width, content] */
const toolRow = [
  [1933, 16, <Glyph k="folder" />],
  [1950, 50, <span>開啟(O)...</span>],
  [2003, 6, <Drop />],
  [2010, 17, <Glyph k="save" />],
  [2038, 17, <Glyph k="print" />],
  [2059, 17, <Glyph k="box" />],
  [2082, 6, <Drop />],
  [2095, 17, <Glyph k="mail" />],
  [2117, 17, <Glyph k="ocr" />],
  [2141, 17, <Glyph k="back" />],
  [2162, 17, <Glyph k="fwd" />],
  [2187, 17, <Glyph k="undo" />],
  [2207, 6, <Drop />],
  [2218, 17, <Glyph k="redo" />],
  [2239, 6, <Drop />],
  [2267, 17, <Glyph k="rotL" />],
  [2292, 17, <Glyph k="rotR" />],
  [2325, 19, <Glyph k="hand" />],
  [2349, 17, <Glyph k="cam" />],
  [2370, 17, <Glyph k="type" />],
  [2407, 17, <Glyph k="zoom" />],
  [2426, 50, <span>放大工具</span>],
  [2479, 6, <Drop />],
  [2492, 17, <Glyph k="page1" />],
  [2513, 17, <Glyph k="page2" />],
  [2534, 19, <Glyph k="page1" />],
];

const secondRow = [
  [2620, 17, <Glyph k="minus" />],
];

const thirdRow = [
  [2712, 17, <Glyph k="plus" />],
  [2751, 17, <Glyph k="find" />],
  [2775, 17, <Glyph k="acro" />],
  [2795, 6, <Drop />],
];

const fourthRow = [
  [2888, 6, <Drop />],
  [2900, 17, <Glyph k="prev" />],
  [2922, 17, <Glyph k="next" />],
  [2947, 17, <Glyph k="funnel" />],
  [2968, 6, <Drop />],
];

const slots = (row, from) => {
  let edge = from;
  return row.map(([x, w, node]) => {
    const ml = x - edge;
    edge = x + w;
    return (
      <PdfSlot key={x} $w={w} $ml={ml} $hot={x === 2325 || x === 2534}>
        {node}
      </PdfSlot>
    );
  });
};

const tabs = [
  { w: 47, t: "v1..." },
  { w: 226, t: "201202_[NTCJ]MTD_promotion_v..." },
  { w: 207, t: "DS_N76E616_EN_Rev1.04 [安全]" },
  { w: 227, t: "DS_M0564_Series_EN_Rev1.00 [安..." },
  { w: 226, t: "TRM_M0564_Series_EN_Rev1.01 [...", active: true, ls: -0.35 },
  { w: 227, t: "TRM_M251_M252_M254_M256_...", ls: -0.2 },
  { w: 192, t: "MCU舊電路 PCB板3140-687A", ls: -0.7 },
];

const thumbs = [
  { n: 20, fill: 92, current: true },
  { n: 21, fill: 92, edge: "right" },
  { n: 22, fill: 90, edge: "left" },
  { n: 23, fill: 92, edge: "right" },
  { n: 24, fill: 88, edge: "left" },
  { n: 25, fill: 90, edge: "right" },
  { n: 26, fill: 22, edge: "left" },
  { n: 27, fill: 90 },
];

const Deg = () => <Degree>o</Degree>;

const clockItems = [
  <>Built-in 22.1184 MHz high speed RC oscillator for system operation (Frequency variation &lt; 2% at -40<Deg />C ~ +105<Deg />C)</>,
  <>Built-in 48 MHz internal high speed RC oscillator (Frequency variation &lt; 2% at -40<Deg />C ~ +105<Deg />C)</>,
  <>Built-in 10 kHz low speed RC oscillator for Watchdog Timer and Wake-up operation</>,
  <>Built-in 4~24 MHz high speed crystal oscillator for precise timing operation</>,
  <>Built-in&nbsp; 32.768 kHz low speed crystal oscillator for Real Time Clock</>,
  <>Supports PLL up to 144 MHz for high resolution PWM operation</>,
  <>Supports dynamically calibrating the HIRC48 to 48 MHz ±0.25% by external 32.768K crystal oscillator (LXT)</>,
  <>Supports dynamically calibrating the <Hit>HIRC</Hit> to 22.1184Mhz by external 32.768K crystal oscillator (LXT)</>,
  <>Supports clock on-the-fly switch</>,
  <>Supports clock failure detection for system clock</>,
  <>Supports auto clock switch once clock failure detected</>,
  <>Supports exception (NMI) generated once a clock failure detected</>,
  <>Supports divided clock output</>,
];

const gpioItems = [
  "Four I/O modes",
  "TTL/Schmitt trigger input selectable",
  "I/O pin configured as interrupt source with edge/level trigger setting",
  "Supports high driver and high sink current I/O (up to 20 mA at 5V)",
  "Supports software selectable slew rate control",
  "Supports up to 81/49/35 GPIOs for LQFP100/64/48 respectively",
];

const Viewer = () => (
  <Pdf>
    <PdfTitle>
      <svg width="15" height="19" viewBox="0 0 15 19">
        <rect width="15" height="19" rx="1" fill="#7eb0dc" />
        <rect x="2" y="11" width="11" height="6" fill="#d83a3a" />
      </svg>
      <PdfTitleText>TRM_M0564_Series_EN_Rev1.01 [安全] - PDF-XChange Viewer</PdfTitleText>
      <PdfWinButton><svg width="12" height="2"><path d="M0 1H12" stroke="#777" /></svg></PdfWinButton>
      <PdfWinButton><svg width="11" height="14" viewBox="0 0 11 14"><path d="M3 1H10V10H8M1 3H8V13H1Z" stroke="#777" fill="none" /></svg></PdfWinButton>
      <PdfWinButton><svg width="12" height="14" viewBox="0 0 12 14"><path d="M1 1L11 13M11 1L1 13" stroke="#777" /></svg></PdfWinButton>
    </PdfTitle>
    <MenuBar>
      {["檔案(F)", "編輯(E)", "檢視(V)", "文件(D)", "註解(C)", "工具(T)", "視窗(W)", "幫助(H)"].map(m => (
        <MenuItem key={m}>{m}</MenuItem>
      ))}
      <Promo>
        <svg width="18" height="18" viewBox="0 0 18 18">
          <circle cx="9" cy="9" r="8.5" fill="#5a88b8" />
          <path d="M8 17V8L10 7V11L14 12V17Z" fill="#fff" stroke="#333" strokeWidth="0.6" />
        </svg>
        <div>Download PDF<br />Creation Tools</div>
      </Promo>
    </MenuBar>
    <PdfTools>
      {slots(toolRow, 1921)}
      <PdfInput $w={47} $ml={7}>153%</PdfInput>
      <PdfSlot $w={6} $ml={6}><Drop /></PdfSlot>
      {slots(secondRow, 2619)}
      <Slider $ml={8} />
      {slots(thirdRow, 2705)}
      <PdfInput $w={80} $ml={5}>HIRC</PdfInput>
      {slots(fourthRow, 2886)}
    </PdfTools>
    <Tabs>
      <TabTools>
        <svg width="12" height="12" viewBox="0 0 12 12" fill="none" stroke="#666"><rect x="1" y="1" width="4" height="4" /><rect x="7" y="1" width="4" height="4" /><rect x="1" y="7" width="4" height="4" /><rect x="7" y="7" width="4" height="4" /></svg>
        <svg width="14" height="14" viewBox="0 0 14 14"><path d="M3 1V11M1 8L3 12L5 8" stroke="#2a6ac8" fill="none" strokeWidth="1.5" /><path d="M8 2H12M8 6H12M8 10H12" stroke="#666" strokeWidth="1.5" /></svg>
        <span>◂◂</span>
      </TabTools>
      {tabs.map(t => (
        <Tab key={t.t} $w={t.w} $active={t.active} $ls={t.ls}>
          {t.t}
          <TabClose>x</TabClose>
        </Tab>
      ))}
      <TabEnd><span>▸▸</span><RedClose>×</RedClose></TabEnd>
    </Tabs>
    <PdfMain>
      <Pane>
        <PaneHead>頁面</PaneHead>
        <PaneTools>
          <Glyph k="zoomIn" />
          <Glyph k="zoomOut" />
          <Glyph k="print" />
          <Glyph k="tree" />
        </PaneTools>
        <PaneBody>
          <ThumbList>
            {thumbs.map(t => (
              <ThumbFrame key={t.n} $current={t.current}>
                <ThumbPage>
                  <ThumbLines $fill={t.fill} />
                  {t.edge && <ThumbEdge $right={t.edge === "right"} />}
                  {t.current && <ThumbView />}
                </ThumbPage>
                <ThumbNo>{t.n}</ThumbNo>
              </ThumbFrame>
            ))}
          </ThumbList>
          <PaneScroll>
            <ScrollArrow width="10" height="6" viewBox="0 0 10 6"><path d="M1 5L5 1L9 5" fill="none" stroke="#555" strokeWidth="1.3" /></ScrollArrow>
            <PaneScrollThumb />
            <ScrollArrow $down width="10" height="6" viewBox="0 0 10 6"><path d="M1 1L5 5L9 1" fill="none" stroke="#555" strokeWidth="1.3" /></ScrollArrow>
          </PaneScroll>
          <GhostDocs width="40" height="42" viewBox="0 0 40 42" fill="#f2f5fa" stroke="#d4dce8">
            <path d="M1 1H13L20 8V30H1Z" />
            <path d="M6 5H18L25 12V36H6Z" />
            <path d="M12 9H30L38 17V41H12Z" />
            <rect x="15" y="24" width="20" height="15" fill="#e4eaf5" stroke="none" />
          </GhostDocs>
        </PaneBody>
      </Pane>
      <Splitter />
      <Page>
        <PageHead>
          <Brand>nuvoTon</Brand>
          <PartNo>M0564</PartNo>
        </PageHead>
        <Band width="1249" height="39" viewBox="0 0 1249 39">
          <rect width="1249" height="39" fill="#e81e0e" />
          <path d="M30 39Q100 13 230 13H1249V39Z" fill="#ee7a4a" stroke="#fde4d8" strokeWidth="2.5" />
          <path d="M110 39Q170 27 262 27H1249V39Z" fill="#f5b592" stroke="#fff" strokeWidth="2.5" />
        </Band>
        <Sheet>
          {clockItems.map((c, i) => (
            <Item key={i}><Dash>-</Dash><ItemText>{c}</ItemText></Item>
          ))}
          <SectionHead>●GPIO</SectionHead>
          {gpioItems.map(g => (
            <Item key={g}><Dash>-</Dash><ItemText>{g}</ItemText></Item>
          ))}
        </Sheet>
        <CornerSquare />
      </Page>
      <VScroll>
        <ScrollArrow width="12" height="7" viewBox="0 0 12 7"><path d="M1 6L6 1L11 6" fill="none" stroke="#555" strokeWidth="1.3" /></ScrollArrow>
        <VThumb />
      </VScroll>
    </PdfMain>
    <StatusRow>
      <PaneTab>書籤</PaneTab>
      <PaneTab $on>頁面</PaneTab>
      <Dither />
      <PageSize>1.59 x 27.94 公分</PageSize>
    </StatusRow>
    <NavRow>
      <NavIcon width="12" height="15" viewBox="0 0 12 15"><path d="M0 0H3V15H0ZM12 0V15L3 7.5Z" fill="#1e6ac0" /></NavIcon>
      <NavIcon $ml={9} width="10" height="15" viewBox="0 0 10 15"><path d="M10 0V15L0 7.5Z" fill="#1e6ac0" /></NavIcon>
      <NavInput>20</NavInput>
      <span>總計 909</span>
      <NavIcon $ml={14} width="10" height="15" viewBox="0 0 10 15"><path d="M0 0V15L10 7.5Z" fill="#1e6ac0" /></NavIcon>
      <NavIcon $ml={9} width="12" height="15" viewBox="0 0 12 15"><path d="M9 0H12V15H9ZM0 0V15L9 7.5Z" fill="#1e6ac0" /></NavIcon>
      <NavIcon $ml={9} width="16" height="16" viewBox="0 0 16 16">{pdfGlyphs.back}</NavIcon>
      <NavIcon $ml={6} width="16" height="16" viewBox="0 0 16 16">{pdfGlyphs.fwd}</NavIcon>
    </NavRow>
  </Pdf>
);

const App = () => (
  <Screen>
    <GlobalStyle />
    <LeftColumn>
      <DSView />
      <TaskBar />
    </LeftColumn>
    <Viewer />
  </Screen>
);

export default App;
